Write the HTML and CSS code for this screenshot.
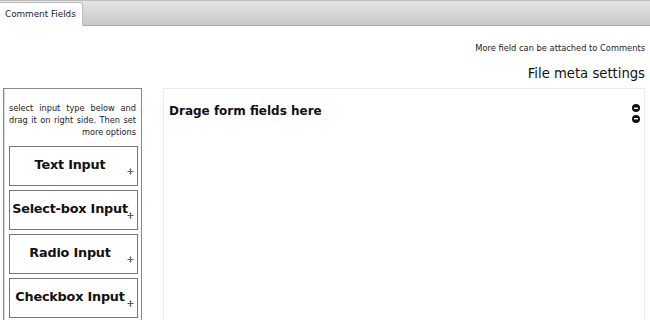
FILE: index.html
```html
<!DOCTYPE html>
<html lang="en">
<head>
    <meta charset="UTF-8">
    <title>Comment Fields</title>
    <link rel="stylesheet" href="styles.css">
</head>
<body>
    <div class="tabs">
        <div class="tab">Comment Fields</div>
    </div>

    <div class="page">
        <p class="note">More field can be attached to Comments</p>
        <h2 class="title">File meta settings</h2>

        <div class="builder">
            <div class="palette">
                <p class="hint">select input type below and drag it on right side. Then set more options</p>
                <div class="field-btn">Text Input <svg class="move" width="7" height="7" viewBox="0 0 7 7"><path d="M3.5 0.5v6M0.5 3.5h6" stroke="#555" stroke-width="1"/><path d="M2.5 1.5h2M2.5 5.5h2" stroke="#777" stroke-width="1"/></svg></div>
                <div class="field-btn">Select-box Input <svg class="move" width="7" height="7" viewBox="0 0 7 7"><path d="M3.5 0.5v6M0.5 3.5h6" stroke="#555" stroke-width="1"/><path d="M2.5 1.5h2M2.5 5.5h2" stroke="#777" stroke-width="1"/></svg></div>
                <div class="field-btn">Radio Input <svg class="move" width="7" height="7" viewBox="0 0 7 7"><path d="M3.5 0.5v6M0.5 3.5h6" stroke="#555" stroke-width="1"/><path d="M2.5 1.5h2M2.5 5.5h2" stroke="#777" stroke-width="1"/></svg></div>
                <div class="field-btn">Checkbox Input <svg class="move" width="7" height="7" viewBox="0 0 7 7"><path d="M3.5 0.5v6M0.5 3.5h6" stroke="#555" stroke-width="1"/><path d="M2.5 1.5h2M2.5 5.5h2" stroke="#777" stroke-width="1"/></svg></div>
            </div>

            <div class="dropzone">
                <div class="dropzone-head">
                    <h3>Drage form fields here</h3>
                    <div class="toggles">
                        <svg width="8" height="8" viewBox="0 0 8 8"><circle cx="4" cy="4" r="4" fill="#111"/><rect x="2" y="3.6" width="4" height="1.4" fill="#fff"/></svg>
                        <svg width="8" height="8" viewBox="0 0 8 8"><circle cx="4" cy="4" r="4" fill="#111"/><rect x="2" y="3" width="4" height="1.4" fill="#fff"/></svg>
                    </div>
                </div>
            </div>
        </div>
    </div>
</body>
</html>
```

FILE: styles.css
```css
body {
    margin: 0;
    font-family: 'DejaVu Sans', Verdana, sans-serif;
    color: #111;
    background: #fff;
    overflow: hidden;
}

.tabs {
    height: 24px;
    background: linear-gradient(to bottom, #e4e4e4 0%, #c9c9c9 100%);
    border-top: 1px solid #bdbdbd;
    border-bottom: 1px solid #a9a9a9;
    display: flex;
    align-items: flex-end;
}

.tab {
    height: 22px;
    margin-bottom: -1px;
    padding: 0 8px 0 5px;
    width: 69px;
    background: #fff;
    border: 1px solid #bdbdbd;
    border-left: none;
    border-bottom: 1px solid #fff;
    border-radius: 0 3px 0 0;
    font-size: 8.8px;
    line-height: 22px;
    color: #222;
    white-space: nowrap;
}

.page {
    padding: 0 5px 0 3px;
}

.note {
    margin: 17px 0 0;
    text-align: right;
    font-size: 8.3px;
    color: #222;
}

.title {
    margin: 13px 0 0;
    text-align: right;
    font-size: 13.2px;
    font-weight: normal;
    color: #111;
}

.builder {
    display: flex;
    gap: 21px;
    margin-top: 7px;
}

.palette {
    width: 129px;
    flex: none;
    height: 219px;
    border: 1px solid #888;
    border-bottom: none;
    box-shadow: inset 1px 0 0 #ddd;
    padding: 13px 3px 0 5px;
}

.hint {
    margin: 0 2px 8px 0;
    font-size: 8.2px;
    line-height: 12px;
    text-align: justify;
    text-align-last: right;
    color: #222;
}

.field-btn {
    position: relative;
    height: 38px;
    margin-bottom: 4px;
    padding-right: 7px;
    border: 1px solid #777;
    font-size: 12.8px;
    font-weight: bold;
    text-align: center;
    line-height: 36px;
    white-space: nowrap;
    letter-spacing: -0.2px;
}

.field-btn:last-child {
    margin-bottom: 0;
}

.move {
    position: absolute;
    right: 3px;
    top: 21px;
}

.dropzone {
    flex: 1;
    height: 216px;
    border: 1px solid #ececec;
    border-bottom: none;
    padding: 15px 4px 0 5px;
}

.dropzone-head {
    display: flex;
    justify-content: space-between;
    align-items: flex-start;
}

.dropzone-head h3 {
    margin: 0;
    font-size: 12px;
    font-weight: bold;
}

.toggles {
    display: flex;
    flex-direction: column;
    gap: 3px;
    margin-top: 0;
}
```
